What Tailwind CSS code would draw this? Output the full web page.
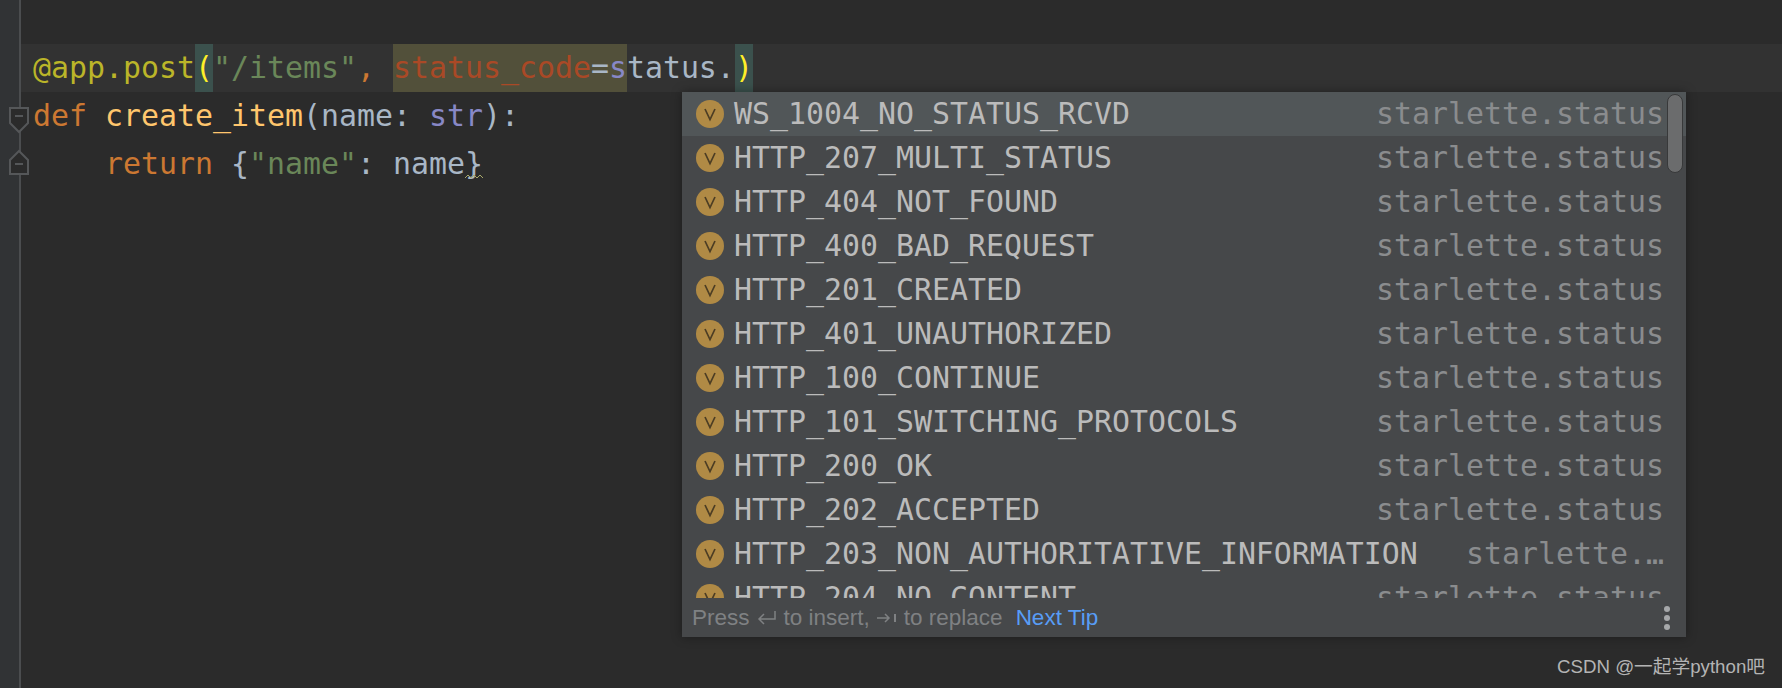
<!doctype html>
<html lang="en">
  <head>
    <meta charset="UTF-8" />
    <title>PyCharm completion</title>
    <script src="https://cdn.jsdelivr.net/npm/@tailwindcss/browser@4"></script>
  </head>
  <body class="bg-[#2b2b2b]">
    <svg class="hidden">
      <symbol id="v-icon" viewBox="0 0 28 28">
        <circle cx="14" cy="14" r="14" fill="#b08a45" />
        <path d="M9 9 L14 19.5 L19 9" fill="none" stroke="#4c3d24" stroke-width="1.7" />
      </symbol>
    </svg>

    <div class="relative flex h-[688px] w-[1782px] overflow-hidden bg-[#2b2b2b]">
      <!-- Gutter -->
      <div class="relative w-[21px] shrink-0 border-r-2 border-[#4b4d4f] bg-[#313335]">
        <svg class="absolute top-[106px] left-[9px]" width="20" height="28" viewBox="0 0 20 28">
          <path d="M1 2 H19 V17 L10 26 L1 17 Z" fill="#2b2b2b" stroke="#555759" stroke-width="2" />
          <path d="M6 10 H14" stroke="#555759" stroke-width="2" />
        </svg>
        <svg class="absolute top-[149px] left-[9px]" width="20" height="28" viewBox="0 0 20 28">
          <path d="M1 25 H19 V11 L10 2 L1 11 Z" fill="#2b2b2b" stroke="#555759" stroke-width="2" />
          <path d="M6 15 H14" stroke="#555759" stroke-width="2" />
        </svg>
      </div>

      <!-- Editor -->
      <div class="flex-1 pt-[44px] font-['DejaVu_Sans_Mono',monospace] text-[29.9px] leading-[48px] text-[#a9b7c6]">
        <div class="h-[48px] bg-[#323232] pl-[12px] whitespace-pre"><span class="text-[#bbb529]">@app.post</span><span class="inline-block h-[48px] bg-[#3b514d] align-top text-[#ffef28]">(</span><span class="text-[#6a8759]">"/items"</span><span class="text-[#cc7832]">, </span><span class="inline-block h-[48px] bg-[#52503a] align-top"><span class="text-[#aa4926]">status_code</span>=<span class="text-[#8888c6]">s</span></span>tatus.<span class="inline-block h-[48px] bg-[#3b514d] align-top text-[#ffef28]">)</span></div>
        <div class="h-[48px] pl-[12px] whitespace-pre"><span class="text-[#cc7832]">def </span><span class="text-[#ffc66d]">create_item</span>(name: <span class="text-[#8888c6]">str</span>):</div>
        <div class="relative h-[48px] pl-[12px] whitespace-pre">    <span class="text-[#cc7832]">return </span>{<span class="text-[#6a8759]">"name"</span>: name}<svg class="absolute top-[34px] left-[444px]" width="18" height="6" viewBox="0 0 18 6"><path d="M0 4 L3 1 L6 4 L9 1 L12 4 L15 1 L18 4" fill="none" stroke="#a8a86a" stroke-width="1" /></svg></div>
      </div>

      <!-- Completion popup -->
      <div class="absolute top-[92px] left-[682px] flex h-[545px] w-[1004px] flex-col bg-[#46484a] font-['DejaVu_Sans_Mono',monospace] text-[29.9px] shadow-[0_0_10px_rgba(0,0,0,0.35)]">
        <div class="relative h-[506px] overflow-hidden">
          <div class="flex h-[44px] shrink-0 items-center justify-between bg-[#515658] pr-[22px] pl-[14px]">
            <span class="flex items-center gap-[10px] text-[#bbbbbb]"><svg class="size-[28px]"><use href="#v-icon" /></svg>WS_1004_NO_STATUS_RCVD</span>
            <span class="text-[#8a8c8e]">starlette.status</span>
          </div>
          <div class="flex h-[44px] items-center justify-between pr-[22px] pl-[14px]">
            <span class="flex items-center gap-[10px] text-[#bbbbbb]"><svg class="size-[28px]"><use href="#v-icon" /></svg>HTTP_207_MULTI_STATUS</span>
            <span class="text-[#8a8c8e]">starlette.status</span>
          </div>
          <div class="flex h-[44px] items-center justify-between pr-[22px] pl-[14px]">
            <span class="flex items-center gap-[10px] text-[#bbbbbb]"><svg class="size-[28px]"><use href="#v-icon" /></svg>HTTP_404_NOT_FOUND</span>
            <span class="text-[#8a8c8e]">starlette.status</span>
          </div>
          <div class="flex h-[44px] items-center justify-between pr-[22px] pl-[14px]">
            <span class="flex items-center gap-[10px] text-[#bbbbbb]"><svg class="size-[28px]"><use href="#v-icon" /></svg>HTTP_400_BAD_REQUEST</span>
            <span class="text-[#8a8c8e]">starlette.status</span>
          </div>
          <div class="flex h-[44px] items-center justify-between pr-[22px] pl-[14px]">
            <span class="flex items-center gap-[10px] text-[#bbbbbb]"><svg class="size-[28px]"><use href="#v-icon" /></svg>HTTP_201_CREATED</span>
            <span class="text-[#8a8c8e]">starlette.status</span>
          </div>
          <div class="flex h-[44px] items-center justify-between pr-[22px] pl-[14px]">
            <span class="flex items-center gap-[10px] text-[#bbbbbb]"><svg class="size-[28px]"><use href="#v-icon" /></svg>HTTP_401_UNAUTHORIZED</span>
            <span class="text-[#8a8c8e]">starlette.status</span>
          </div>
          <div class="flex h-[44px] items-center justify-between pr-[22px] pl-[14px]">
            <span class="flex items-center gap-[10px] text-[#bbbbbb]"><svg class="size-[28px]"><use href="#v-icon" /></svg>HTTP_100_CONTINUE</span>
            <span class="text-[#8a8c8e]">starlette.status</span>
          </div>
          <div class="flex h-[44px] items-center justify-between pr-[22px] pl-[14px]">
            <span class="flex items-center gap-[10px] text-[#bbbbbb]"><svg class="size-[28px]"><use href="#v-icon" /></svg>HTTP_101_SWITCHING_PROTOCOLS</span>
            <span class="text-[#8a8c8e]">starlette.status</span>
          </div>
          <div class="flex h-[44px] items-center justify-between pr-[22px] pl-[14px]">
            <span class="flex items-center gap-[10px] text-[#bbbbbb]"><svg class="size-[28px]"><use href="#v-icon" /></svg>HTTP_200_OK</span>
            <span class="text-[#8a8c8e]">starlette.status</span>
          </div>
          <div class="flex h-[44px] items-center justify-between pr-[22px] pl-[14px]">
            <span class="flex items-center gap-[10px] text-[#bbbbbb]"><svg class="size-[28px]"><use href="#v-icon" /></svg>HTTP_202_ACCEPTED</span>
            <span class="text-[#8a8c8e]">starlette.status</span>
          </div>
          <div class="flex h-[44px] items-center justify-between pr-[22px] pl-[14px]">
            <span class="flex items-center gap-[10px] text-[#bbbbbb]"><svg class="size-[28px]"><use href="#v-icon" /></svg>HTTP_203_NON_AUTHORITATIVE_INFORMATION</span>
            <span class="text-[#8a8c8e]">starlette.…</span>
          </div>
          <div class="flex h-[44px] items-center justify-between pr-[22px] pl-[14px]">
            <span class="flex items-center gap-[10px] text-[#bbbbbb]"><svg class="size-[28px]"><use href="#v-icon" /></svg>HTTP_204_NO_CONTENT</span>
            <span class="text-[#8a8c8e]">starlette.status</span>
          </div>
          <!-- Scrollbar -->
          <div class="absolute top-[2px] right-[3px] h-[79px] w-[16px] rounded-full border border-[#38393a] bg-[#6b6c6d]"></div>
        </div>

        <!-- Footer -->
        <div class="flex flex-1 items-center justify-between pt-px pr-[16px] pl-[10px] font-['Liberation_Sans',sans-serif] text-[22.5px] text-[#7f8183]">
          <span class="flex items-center">Press
            <svg class="mx-[7px]" width="20" height="16" viewBox="0 0 20 16"><path d="M18 1 V9 H2 M7 4 L2 9 L7 14" fill="none" stroke="#7f8183" stroke-width="1.5" /></svg>
            to insert,
            <svg class="mx-[7px]" width="20" height="14" viewBox="0 0 20 14"><path d="M0 7 H12 M8 3 L12 7 L8 11" fill="none" stroke="#7f8183" stroke-width="1.5" /><path d="M18 3 V11" stroke="#7f8183" stroke-width="2" /></svg>
            to replace
            <span class="ml-[13px] text-[#589df6]">Next Tip</span>
          </span>
          <span class="flex flex-col gap-[3px]">
            <span class="size-[6px] rounded-full bg-[#a6a8aa]"></span>
            <span class="size-[6px] rounded-full bg-[#a6a8aa]"></span>
            <span class="size-[6px] rounded-full bg-[#a6a8aa]"></span>
          </span>
        </div>
      </div>

      <!-- Watermark -->
      <div class="absolute top-[655px] left-[1557px] font-['Liberation_Sans','Noto_Sans_CJK_SC',sans-serif] text-[18.7px] leading-[24px] text-[#b4b4b4]">CSDN @一起学python吧</div>
    </div>
  </body>
</html>
